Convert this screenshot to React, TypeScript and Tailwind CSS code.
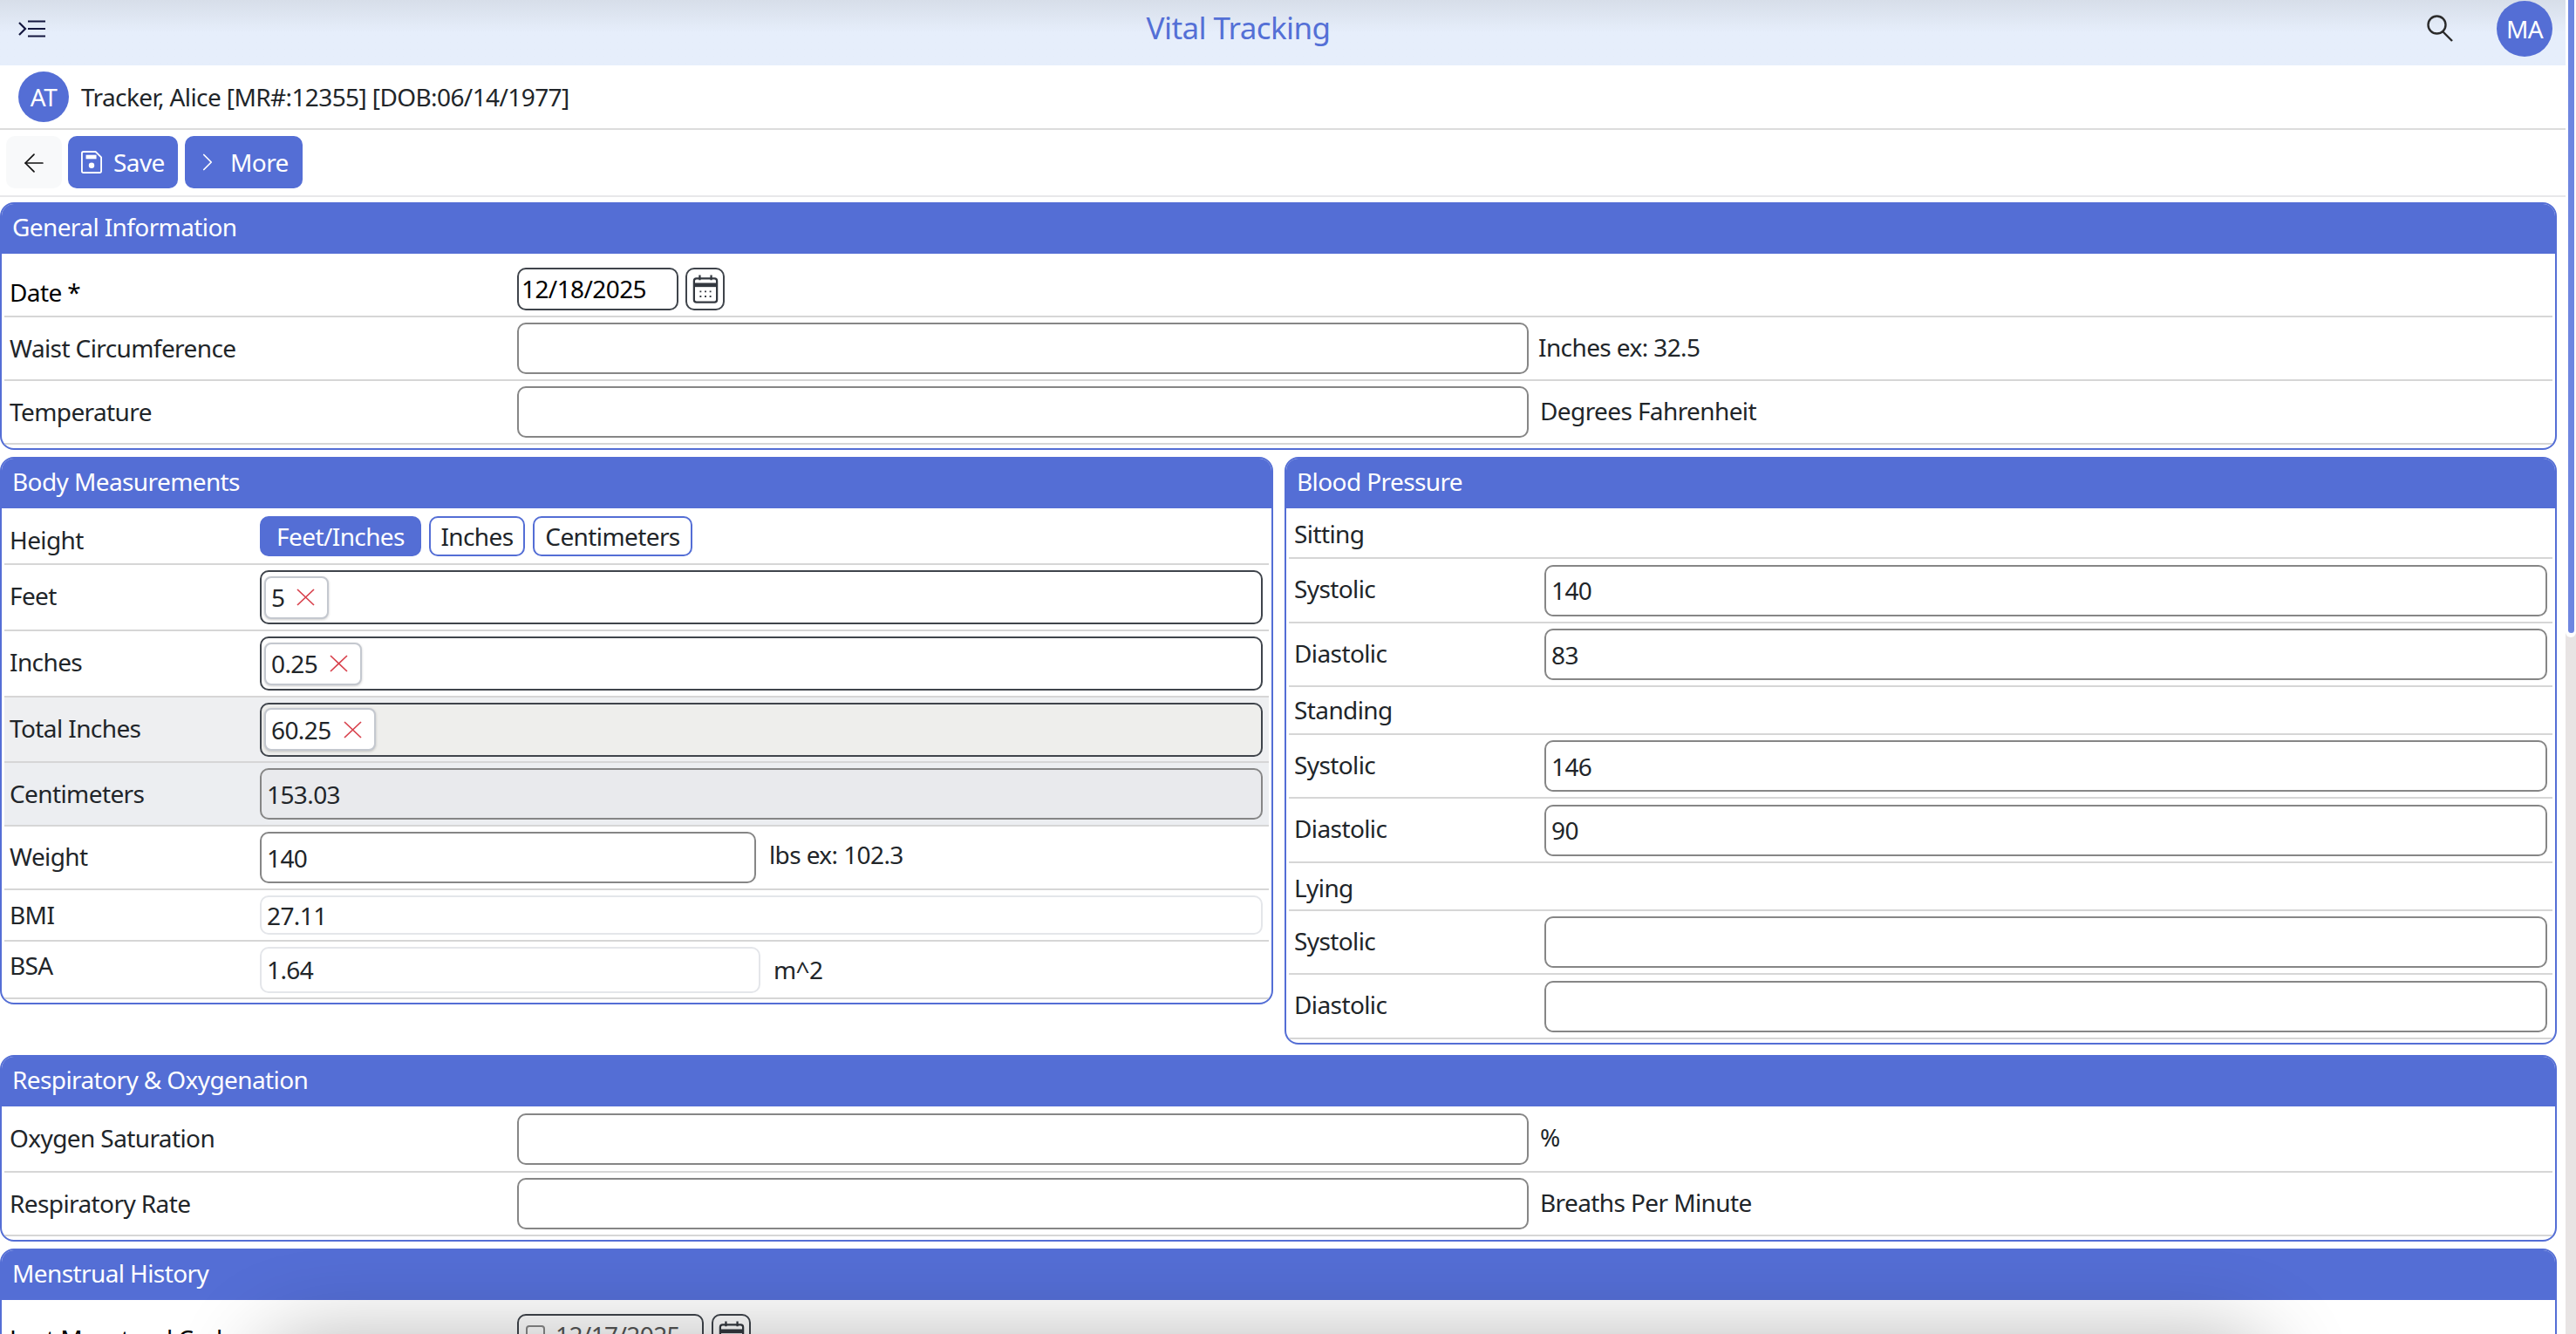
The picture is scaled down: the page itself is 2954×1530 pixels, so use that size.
import { ArrowLeft, ChevronRight } from "lucide-react";
import type { ReactNode } from "react";

const plain = "h-[59px] border-[#868686] bg-white";
const faint = "border-[#e4e6ea] bg-white";

const Card = ({ title, children }: { title: string; children: ReactNode }) => (
  <section className="overflow-hidden rounded-[16px] border-2 border-[#546ed5] bg-white">
    <div className="h-[57px] bg-[#546ed5] pl-[12px] text-[28px] leading-[53px] text-white">{title}</div>
    {children}
  </section>
);

const Row = ({ label, h, children, className = "", labelClass = "" }: { label: string; h: string; children?: ReactNode; className?: string; labelClass?: string }) => (
  <div className={`mx-[3px] flex items-center border-b-2 border-[#d6d6d6] ${h} ${className}`}>
    <span className={`shrink-0 pl-[6px] ${labelClass}`}>{label}</span>
    {children}
  </div>
);

const TextBox = ({ value = "", className = "" }: { value?: string; className?: string }) => (
  <input readOnly value={value} className={`rounded-[10px] border-2 px-[6px] text-[#212529] outline-none ${className}`} />
);

const Chip = ({ value }: { value: string }) => (
  <span className="ml-[3px] flex h-[49px] items-center gap-[14px] rounded-[8px] border-2 border-[#c4c8cf] bg-white pl-[6px] pr-[14px] shadow-[0_1px_3px_rgba(0,0,0,0.2)]">
    {value}
    <svg viewBox="0 0 21 20" className="h-[20px] w-[21px]" fill="none" stroke="#d8414c" strokeWidth="1.7">
      <path d="M1 1l19 18M20 1L1 19" />
    </svg>
  </span>
);

const ChipBox = ({ value, className = "" }: { value: string; className?: string }) => (
  <div className={`flex h-[62px] w-[1150px] items-center rounded-[10px] border-2 border-[#3f444b] ${className}`}>
    <Chip value={value} />
  </div>
);

const CalendarIcon = () => (
  <svg viewBox="0 0 32 36" className="h-[35px] w-[30px] shrink-0" fill="none" stroke="#33383f" strokeWidth="2.4">
    <rect x="2" y="5" width="28" height="29" rx="3" />
    <path d="M2 13h28" strokeWidth="5" />
    <path d="M9 1v6M23 1v6" />
    <path d="M9 21h2M15 21h2M21 21h2M9 27h2M15 27h2M21 27h2" strokeWidth="2" />
  </svg>
);

const Toggle = ({ label, active = false, w }: { label: string; active?: boolean; w: string }) => (
  <span className={`flex h-[46px] items-center justify-center rounded-[10px] border-2 border-[#546ed5] ${w} ${active ? "bg-[#546ed5] text-white" : "bg-white"}`}>
    {label}
  </span>
);

export default function App() {
  return (
    <div className="relative flex h-[1530px] w-[2954px] overflow-hidden bg-white font-['Noto_Sans',sans-serif] text-[28px] tracking-[-0.6px] text-[#212529]">
      <div className="w-[2942px] shrink-0">
        {/* Top bar */}
        <header className="flex h-[75px] items-center bg-gradient-to-b from-[#d7dee9] to-[#e6eefb] to-50% pb-[10px]">
          <svg viewBox="0 0 31 20" className="ml-[21px] mr-[18px] h-[20px] w-[31px]" fill="none" stroke="#14173f" strokeWidth="2.2">
            <path d="M1 3l7 7-7 7" />
            <path d="M11 1.5h20M11 10h20M11 18.5h20" />
          </svg>
          <div className="flex-1 pr-[13px] text-center text-[35px] text-[#5470d6]">Vital Tracking</div>
          <svg viewBox="0 0 30 31" className="mr-[50px] h-[31px] w-[30px]" fill="none" stroke="#2b2b2b" strokeWidth="2.4">
            <circle cx="11.5" cy="11.5" r="10" />
            <path d="M18 19l11 11" />
          </svg>
          <div className="mr-[15px] flex size-[64px] items-center justify-center rounded-full bg-[#546ed5] text-white">MA</div>
        </header>

        {/* Patient */}
        <div className="flex h-[74px] items-center border-b-2 border-[#dcdcdc] pl-[21px]">
          <div className="flex size-[58px] items-center justify-center rounded-full bg-[#546ed5] text-white">AT</div>
          <span className="ml-[14px]">Tracker, Alice [MR#:12355] [DOB:06/14/1977]</span>
        </div>

        {/* Toolbar */}
        <div className="flex h-[77px] gap-[7px] border-b-2 border-[#e8e8ea] pl-[7px] pt-[7px]">
          <button className="flex h-[60px] w-[64px] items-center justify-center rounded-[10px] bg-[#f8f9fa]">
            <ArrowLeft className="mt-[2px] size-[34px] text-[#111]" strokeWidth={1.2} />
          </button>
          <button className="flex h-[60px] w-[126px] items-center gap-[13px] rounded-[10px] bg-[#546ed5] pl-[15px] text-white">
            <svg viewBox="0 0 26 28" className="h-[26px] w-[24px]" fill="none" stroke="#fff" strokeWidth="2">
              <path d="M3 1h15l7 7v17a2 2 0 0 1-2 2H3a2 2 0 0 1-2-2V3a2 2 0 0 1 2-2z" />
              <rect x="6" y="5" width="13" height="5" fill="#fff" stroke="none" />
              <circle cx="13" cy="18" r="3.5" fill="#fff" stroke="none" />
            </svg>
            Save
          </button>
          <button className="ml-[1px] flex h-[60px] w-[135px] items-center gap-[9px] rounded-[10px] bg-[#546ed5] pl-[9px] text-white">
            <ChevronRight className="size-[34px]" strokeWidth={1.2} />
            More
          </button>
        </div>

        <div className="mr-[10px] mt-[6px]">
          <Card title="General Information">
            <Row label="Date *" h="h-[73px]" labelClass="mt-[17px] w-[588px] text-black">
              <TextBox value="12/18/2025" className="mt-[9px] h-[49px] w-[185px] border-[#3f444b] bg-white !px-[3px] !text-black" />
              <span className="ml-[8px] mt-[9px] flex h-[49px] w-[45px] items-center justify-center rounded-[10px] border-2 border-[#3f444b]">
                <CalendarIcon />
              </span>
            </Row>
            <Row label="Waist Circumference" h="h-[73px]" labelClass="w-[588px] -mt-[2px]">
              <TextBox className={`${plain} w-[1160px]`} />
              <span className="-mt-[4px] ml-[11px]">Inches ex: 32.5</span>
            </Row>
            <Row label="Temperature" h="h-[73px]" labelClass="w-[588px] -mt-[2px]">
              <TextBox className={`${plain} w-[1160px]`} />
              <span className="-mt-[4px] ml-[13px]">Degrees Fahrenheit</span>
            </Row>
            <div className="h-[4px]" />
          </Card>

          <div className="mb-[6px] mt-[8px] grid grid-cols-[1460px_1459px] items-start gap-[13px]">
            <Card title="Body Measurements">
              <Row label="Height" h="h-[65px]" labelClass="mt-[9px] w-[293px]">
                <div className="flex gap-[9px]">
                  <Toggle label="Feet/Inches" active w="w-[185px]" />
                  <Toggle label="Inches" w="w-[110px]" />
                  <Toggle label="Centimeters" w="w-[183px]" />
                </div>
              </Row>
              <Row label="Feet" h="h-[76px]" labelClass="-mt-[4px] w-[293px]">
                <ChipBox value="5" />
              </Row>
              <Row label="Inches" h="h-[76px]" labelClass="-mt-[4px] w-[293px]">
                <ChipBox value="0.25" />
              </Row>
              <Row label="Total Inches" h="h-[75px]" labelClass="-mt-[4px] w-[293px]" className="bg-[#eeeff1]">
                <ChipBox value="60.25" className="bg-[#eeeeec]" />
              </Row>
              <Row label="Centimeters" h="h-[73px]" labelClass="-mt-[2px] w-[293px]" className="bg-[#eceef1]">
                <TextBox value="153.03" className="h-[59px] w-[1150px] border-[#868686] bg-[#e9eaed]" />
              </Row>
              <Row label="Weight" h="h-[73px]" labelClass="-mt-[4px] w-[293px]">
                <TextBox value="140" className={`${plain} w-[569px]`} />
                <span className="-mt-[8px] ml-[15px]">lbs ex: 102.3</span>
              </Row>
              <Row label="BMI" h="h-[59px]" labelClass="-mt-[2px] w-[293px]">
                <TextBox value="27.11" className={`${faint} h-[45px] w-[1150px]`} />
              </Row>
              <Row label="BSA" h="h-[66px]" labelClass="-mt-[10px] w-[293px]">
                <TextBox value="1.64" className={`${faint} h-[53px] w-[574px]`} />
                <span className="ml-[15px]">m^2</span>
              </Row>
              <div className="h-[4px]" />
            </Card>

            <Card title="Blood Pressure">
              <Row label="Sitting" h="h-[58px]" labelClass="mt-[2px]" />
              <Row label="Systolic" h="h-[74px]" labelClass="-mt-[4px] w-[293px]">
                <TextBox value="140" className={`${plain} w-[1150px]`} />
              </Row>
              <Row label="Diastolic" h="h-[73px]" labelClass="-mt-[4px] w-[293px]">
                <TextBox value="83" className={`${plain} w-[1150px]`} />
              </Row>
              <Row label="Standing" h="h-[55px]" labelClass="-mt-[1px]" />
              <Row label="Systolic" h="h-[73px]" labelClass="-mt-[4px] w-[293px]">
                <TextBox value="146" className={`${plain} w-[1150px]`} />
              </Row>
              <Row label="Diastolic" h="h-[74px]" labelClass="-mt-[4px] w-[293px]">
                <TextBox value="90" className={`${plain} w-[1150px]`} />
              </Row>
              <Row label="Lying" h="h-[55px]" labelClass="mt-[2px]" />
              <Row label="Systolic" h="h-[73px]" labelClass="-mt-[4px] w-[293px]">
                <TextBox className={`${plain} w-[1150px]`} />
              </Row>
              <Row label="Diastolic" h="h-[74px]" labelClass="-mt-[4px] w-[293px]">
                <TextBox className={`${plain} w-[1150px]`} />
              </Row>
              <div className="h-[4px]" />
            </Card>
          </div>

          <div className="mt-[12px]">
            <Card title="Respiratory & Oxygenation">
              <Row label="Oxygen Saturation" h="h-[76px]" labelClass="w-[588px] -mt-[2px]">
                <TextBox className={`${plain} w-[1160px]`} />
                <span className="-mt-[4px] ml-[13px]">%</span>
              </Row>
              <Row label="Respiratory Rate" h="h-[73px]" labelClass="w-[588px] -mt-[2px]">
                <TextBox className={`${plain} w-[1160px]`} />
                <span className="-mt-[4px] ml-[13px]">Breaths Per Minute</span>
              </Row>
              <div className="h-[4px]" />
            </Card>
          </div>

          <div className="mt-[8px]">
            <Card title="Menstrual History">
              <Row label="Last Menstrual Cycle" h="h-[73px]" labelClass="mt-[17px] w-[588px] text-black">
                <div className="mt-[9px] flex h-[49px] w-[214px] items-center gap-[12px] rounded-[10px] border-2 border-[#3f444b] pl-[8px] text-[#555]">
                  <span className="size-[22px] rounded-[4px] border-2 border-[#888]" />
                  12/17/2025
                </div>
                <span className="ml-[9px] mt-[9px] flex h-[49px] w-[45px] items-center justify-center rounded-[10px] border-2 border-[#3f444b]">
                  <CalendarIcon />
                </span>
              </Row>
            </Card>
          </div>
        </div>
      </div>

      {/* Scrollbar */}
      <div className="flex w-[12px] shrink-0 flex-col bg-[#e8e4e4]">
        <div className="h-[731px] rounded-b-[6px] bg-white pl-[3px] pr-[2px]">
          <div className="h-[726px] rounded-b-[4px] bg-[#6f86e0]" />
        </div>
      </div>

      {/* Shadow of a panel sitting just under the fold */}
      <div className="pointer-events-none absolute left-[340px] top-[1575px] h-[100px] w-[2220px] rounded-[20px] shadow-[0_0_100px_40px_rgba(0,0,0,0.3)]" />
    </div>
  );
}
